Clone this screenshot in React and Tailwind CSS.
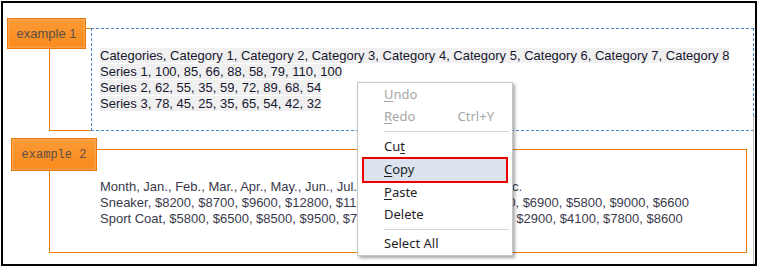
import React from "react";

const sans = { fontFamily: '"Liberation Sans", Arial, sans-serif' };
const mono = { fontFamily: '"Liberation Mono", "Courier New", monospace' };
const menuFont = { fontFamily: '"Noto Sans", "Liberation Sans", sans-serif' };

const example1 = [
    "Categories, Category 1, Category 2, Category 3, Category 4, Category 5, Category 6, Category 7, Category 8",
    "Series 1, 100, 85, 66, 88, 58, 79, 110, 100",
    "Series 2, 62, 55, 35, 59, 72, 89, 68, 54",
    "Series 3, 78, 45, 25, 35, 65, 54, 42, 32",
];

const example2 = [
    "Month, Jan., Feb., Mar., Apr., May., Jun., Jul., Aug., Sep., Oct., Nov., Dec.",
    "Sneaker, $8200, $8700, $9600, $12800, $11000, $10500, $9800, $7500, $6900, $5800, $9000, $6600",
    "Sport Coat, $5800, $6500, $8500, $9500, $7600, $6800, $5200, $3600, $2900, $4100, $7800, $8600",
];

function Label({ children, className, font }) {
    return (
        <div
            className={`absolute flex items-center justify-center border border-[#e8780a] bg-[linear-gradient(#fb9a35,#f98a1d)] shadow-[inset_0_0_3px_rgba(255,200,140,0.9)] text-[#5a5046] ${className}`}
            style={font}
        >
            {children}
        </div>
    );
}

function MenuItem({ children, shortcut, disabled, active }) {
    const color = disabled ? "text-[#a6a6a6]" : "text-[#1e1e1e]";
    const box = active
        ? "mx-[4px] -my-[1px] h-[26px] pl-[20px] pr-2 bg-[#dae3ee] border-2 border-[#ee0000]"
        : "h-[22px] pl-[26px] pr-2";
    return (
        <div className={`flex items-center ${color} ${box}`}>
            <span className="flex-1">{children}</span>
            {shortcut && <span className="pr-[10px]">{shortcut}</span>}
        </div>
    );
}

function Separator() {
    return (
        <div className="h-[7px] flex items-center pl-[26px] pr-[3px]">
            <div className="h-px w-full bg-[#d4d4d4]" />
        </div>
    );
}

export default function App() {
    return (
        <div className="w-[758px] h-[267px] bg-white pt-[1px] pl-[1px]">
            <div className="relative w-[756px] h-[265px] border-2 border-black overflow-hidden" style={sans}>
                {/* Example 1 */}
                <div className="ml-[46px] mt-[25px] w-[705px] h-[103px] flex">
                    <div className="w-[42px] border-l border-t border-b border-[#e87d0e]" />
                    <div className="flex-1 bg-white border border-dashed border-[#4a86cc] pl-[8px] pt-[19px]">
                        <div className="text-[13px] leading-[16px] text-[#16162e]">
                            {example1.map((line) => (
                                <div key={line}>
                                    <span className="bg-[#f0f0f0]">{line}</span>
                                </div>
                            ))}
                        </div>
                    </div>
                </div>

                {/* Example 2 */}
                <div className="ml-[46px] mt-[18px] w-[698px] h-[104px] border border-[#e87d0e] pl-[50px] pt-[29px]">
                    <div className="text-[13px] leading-[16px] text-[#3a3a4c]">
                        {example2.map((line) => (
                            <div key={line} className="whitespace-nowrap">{line}</div>
                        ))}
                    </div>
                </div>

                <Label className="left-[4px] top-[15px] w-[79px] h-[31px] text-[13px]" font={sans}>
                    example 1
                </Label>
                <Label className="left-[8px] top-[135px] w-[86px] h-[33px] text-[12px]" font={mono}>
                    example 2
                </Label>

                {/* scroll edge */}
                <div className="absolute left-[750px] top-[113px] w-[3px] h-[148px] border-l border-t border-b border-[#c0c0c0] bg-white" />

                {/* Context menu */}
                <div
                    className="absolute left-[354px] top-[79px] w-[156px] h-[174px] bg-white border border-[#c6c6c6] shadow-[2px_2px_3px_rgba(0,0,0,0.35)] py-[1px] text-[13px]"
                    style={menuFont}
                >
                    <MenuItem disabled><u className="underline-offset-2">U</u>ndo</MenuItem>
                    <MenuItem disabled shortcut="Ctrl+Y"><u className="underline-offset-2">R</u>edo</MenuItem>
                    <Separator />
                    <div className="h-[1px]" />
                    <MenuItem>Cu<u className="underline-offset-2">t</u></MenuItem>
                    <MenuItem active><u className="underline-offset-2">C</u>opy</MenuItem>
                    <MenuItem><u className="underline-offset-2">P</u>aste</MenuItem>
                    <MenuItem>Delete</MenuItem>
                    <Separator />
                    <MenuItem>Select All</MenuItem>
                </div>
            </div>
        </div>
    );
}
